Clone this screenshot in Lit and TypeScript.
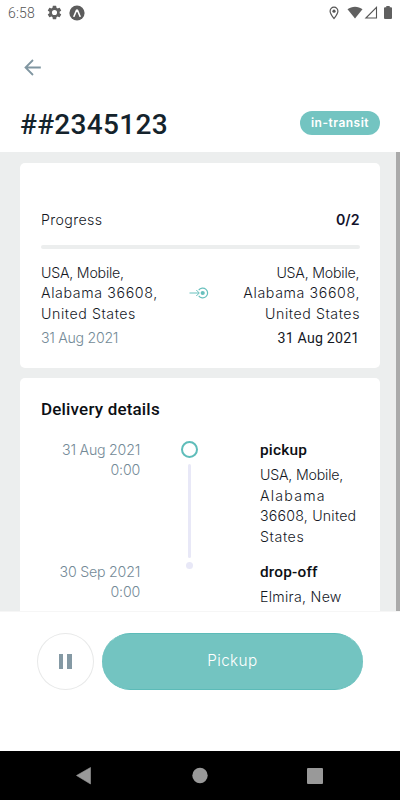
import { LitElement, html, css } from "lit";
import { customElement, property } from "lit/decorators.js";
import { styleMap } from "lit/directives/style-map.js";

/* A line of text with its own tracking, in pixels. */
type Line = [text: string, tracking: number];

const lineOf = ([text, tracking]: Line) =>
  html`<div class="text" style=${styleMap({ letterSpacing: `${tracking}px`, marginRight: `${-tracking}px` })}>${text}</div>`;

const route: Line[] = [["USA, Mobile,", -0.22], ["Alabama 36608,", 0.62], ["United States", 0.56]];

@customElement("status-bar")
class StatusBar extends LitElement {
  static styles = css`
    :host { display: flex; height: 26px; box-sizing: border-box; padding: 0 8px; align-items: center; justify-content: space-between; color: #555; }
    .time { font: 300 14px/26px Roboto, sans-serif; width: 39px; letter-spacing: 0.2px; }
    .left, .right { display: flex; align-items: center; margin-top: -1px; }
    svg { display: block; }
    .gear { margin-right: 7px; margin-left: -.5px; }
    .pin { margin-right: 8px; }
    .wifi { margin-right: 1px; }
    .signal { margin-right: 6px; }
    .right { margin-right: 0.500px; }
  `;
  render() {
    return html`
      <div class="left">
        <span class="time">6:58</span>
        <svg class="gear" width="15" height="15" viewBox="1.500 1.500 21 21" fill="#606060"><path d="M19.14 12.94c.04-.3.06-.61.06-.94s-.02-.64-.07-.94l2.03-1.58a.49.49 0 0 0 .12-.61l-1.92-3.32a.49.49 0 0 0-.59-.22l-2.39.96c-.5-.38-1.03-.7-1.62-.94l-.36-2.54a.48.48 0 0 0-.48-.41h-3.84c-.24 0-.43.17-.47.41l-.36 2.54c-.59.24-1.13.57-1.62.94l-2.39-.96a.48.48 0 0 0-.59.22L2.74 8.87a.47.47 0 0 0 .12.61l2.03 1.58c-.05.3-.09.63-.09.94s.02.64.07.94l-2.03 1.58a.49.49 0 0 0-.12.61l1.92 3.32c.12.22.37.29.59.22l2.39-.96c.5.38 1.03.7 1.62.94l.36 2.54c.05.24.24.41.48.41h3.84c.24 0 .44-.17.47-.41l.36-2.54c.59-.24 1.13-.56 1.62-.94l2.39.96c.22.08.47 0 .59-.22l1.92-3.32a.47.47 0 0 0-.12-.61zM12 15.6A3.6 3.6 0 1 1 12 8.4a3.6 3.6 0 0 1 0 7.2z"/></svg>
        <svg width="16" height="16" viewBox="0 0 16 16"><circle cx="8" cy="8" r="7.600" fill="#5c5c5c"/><path d="M5 11.200 7.400 5.500Q8 4.500 8.600 5.500L11 11.200" fill="none" stroke="#fff" stroke-width="1.600" stroke-linecap="round" stroke-linejoin="round"/></svg>
      </div>
      <div class="right">
        <svg class="pin" width="10" height="14" viewBox="0 0 10 14"><path d="M5 1.200a3.900 3.900 0 0 0-3.900 4C1.100 7.500 3.500 10.500 5 12.500 6.500 10.500 8.900 7.500 8.900 5.200A3.900 3.900 0 0 0 5 1.200z" fill="none" stroke="#555" stroke-width="1.200"/><circle cx="5" cy="5.200" r="1.600" fill="#555"/></svg>
        <svg class="wifi" width="16" height="13" viewBox="0 0 16 13"><path d="M.5 3.300C4.800-.2 11.200-.2 15.500 3.300L8 12.500z" fill="#606060"/></svg>
        <svg class="signal" width="14" height="13" viewBox="0 0 14 13"><path d="M12.500 1.400V12H1.900z" fill="none" stroke="#555" stroke-width="1.100"/></svg>
        <svg width="8" height="13" viewBox="0 0 8 13"><path d="M2.300 0h3.400v1.300H7q1 0 1 1V12q0 1-1 1H1q-1 0-1-1V2.300q0-1 1-1h1.300z" fill="#606060"/></svg>
      </div>`;
  }
}

@customElement("timeline-stop")
class TimelineStop extends LitElement {
  @property() date = "";
  @property() time = "";
  @property() kind = "";
  @property({ type: Boolean }) active = false;
  @property({ attribute: false }) lines: Line[] = [];
  static styles = css`
    :host { display: grid; grid-template-columns: 99px 99px 1fr; height: 122px; font: 300 14.2px/20.4px Inter, sans-serif; color: #15181f; }
    .when { text-align: right; color: #748a97; white-space: nowrap; letter-spacing: -0.22px; }
    .when div, .text { height: 20.4px; white-space: nowrap; }
    .rail { display: flex; flex-direction: column; align-items: center; }
    .ring { width: 17px; height: 17px; box-sizing: border-box; border: 2px solid #5fbdba; border-radius: 50%; margin-top: 1px; }
    .line { width: 2.5px; height: 94px; margin-top: 6px; background: #e8e8f7; border-radius: 2px; }
    .dot { width: 7px; height: 7px; border-radius: 50%; background: #e8e8f7; }
    .where { padding-left: 21px; }
    .kind { font: 500 15.4px/21px Roboto, sans-serif; height: 25.4px; letter-spacing: 0.2px; color: #0c0f14; }
  `;
  render() {
    return html`
      <div class="when"><div>${this.date}</div><div>${this.time}</div></div>
      <div class="rail">${this.active ? html`<span class="ring"></span><span class="line"></span>` : html`<span class="dot"></span>`}</div>
      <div class="where">
        <div class="kind">${this.kind}</div>
        ${this.lines.map(lineOf)}
      </div>`;
  }
}

@customElement("app-root")
class AppRoot extends LitElement {
  static styles = css`
    :host { display: flex; flex-direction: column; width: 400px; height: 800px; overflow: hidden; background: #fff; color: #15181f; font: 300 14.2px/20.4px Inter, sans-serif; }
    svg { display: block; }
    .header { height: 126px; box-sizing: border-box; padding: 33px 20px 0 21px; flex: none; }
    .back { margin-left: 3px; }
    .title-row { display: flex; justify-content: space-between; align-items: center; height: 40px; margin-top: 27px; }
    .title { font: 500 28px/40px Roboto, sans-serif; margin: 0 0 0 -1px; color: #14232c; letter-spacing: 0.3px; padding-top: 3px; }
    .badge { background: #73c4c1; color: #fff; font: 600 12px/23px Inter, sans-serif; width: 80px; height: 24px; border-radius: 12px; text-align: center; letter-spacing: 0.5px; }
    .body { flex: none; height: 460px; background: #eceeee; display: flex; overflow: hidden; box-sizing: border-box; border-bottom: 1px solid #f6f6f6; }
    .cards { flex: 1; display: flex; flex-direction: column; gap: 10px; padding: 11px 16px 0 20px; }
    .scroll { width: 4px; background: #aaa; }
    .card { background: #fff; border-radius: 5px; padding: 0 20.5px 0 21px; flex: none; }
    .summary { height: 205px; box-sizing: border-box; padding-top: 46px; }
    .progress { display: flex; justify-content: space-between; height: 22px; line-height: 22px; }
    .label { letter-spacing: 0.38px; }
    .count { font-weight: 600; color: #12122c; }
    .track { height: 4px; border-radius: 2px; background: #eceeee; margin: 14px 0; }
    .route { display: flex; justify-content: space-between; }
    .place { width: 130px; white-space: nowrap; }
    .text { height: 20.4px; }
    .to { text-align: right; }
    .date { color: #748a97; margin-top: 4px; letter-spacing: -0.3px; }
    .to .date { font: 400 14.2px/21.4px Roboto, sans-serif; color: #15181f; letter-spacing: 0.2px; }
    .arrow { margin: 23px 0 0 -2px; }
    .details { height: 260px; padding-top: 20px; box-sizing: border-box; }
    h2 { font: 500 17px/22px Roboto, sans-serif; color: #0c0f14; margin: 0 0 20px; letter-spacing: 0.18px; }
    .footer { flex: none; height: 139px; box-sizing: border-box; padding: 21px 37px 0; display: flex; gap: 8px; }
    .pause { width: 57px; height: 57px; box-sizing: border-box; border: 1px solid #e8e9e9; border-radius: 50%; display: flex; gap: 4px; align-items: center; justify-content: center; }
    .pause span { width: 4.5px; height: 15px; background: #8499a4; }
    .pickup { width: 262px; height: 57px; box-sizing: border-box; border: 1px solid #5cbbb8; border-width: 1px 0; border-radius: 29px; background: #73c4c1; color: #fff; font: 300 15.3px/53px Inter, sans-serif; letter-spacing: 0.4px; text-align: center; }
    .nav { flex: none; height: 49px; background: #000; }
  `;
  render() {
    return html`
      <status-bar></status-bar>
      <div class="header">
        <svg class="back" width="18" height="17" viewBox="0 0 18 17"><path d="M16.800 8.500H1.500M9 1 1.500 8.500 9 16" fill="none" stroke="#8096a1" stroke-width="1.800"/></svg>
        <div class="title-row">
          <h1 class="title">##2345123</h1>
          <div class="badge">in-transit</div>
        </div>
      </div>
      <div class="body">
        <div class="cards">
          <div class="card summary">
            <div class="progress"><span class="label">Progress</span><span class="count">0/2</span></div>
            <div class="track"></div>
            <div class="route">
              <div class="place">${route.map(lineOf)}<div class="date">31 Aug 2021</div></div>
              <svg class="arrow" width="20" height="14" viewBox="0 0 20 14" fill="none" stroke="#68c0bd"><path d="M.5 7h9.500M7.300 4l3 3-3 3"/><path d="M9.700 4.200A4.900 4.900 0 1 1 9.700 9.800" stroke-width="1.200"/><circle cx="13.700" cy="7" r="2.100" fill="#68c0bd" stroke="none"/></svg>
              <div class="place to">${route.map(lineOf)}<div class="date">31 Aug 2021</div></div>
            </div>
          </div>
          <div class="card details">
            <h2>Delivery details</h2>
            <timeline-stop active date="31 Aug 2021" time="0:00" kind="pickup" .lines=${[["USA, Mobile,", -0.2], ["Alabama", 1.2], ["36608, United", 0.2], ["States", 0.6]] as Line[]}></timeline-stop>
            <timeline-stop date="30 Sep 2021" time="0:00" kind="drop-off" .lines=${[["Elmira, New", 0.28]] as Line[]}></timeline-stop>
          </div>
        </div>
        <div class="scroll"></div>
      </div>
      <div class="footer">
        <div class="pause"><span></span><span></span></div>
        <div class="pickup">Pickup</div>
      </div>
      <div class="nav">
        <svg width="400" height="49" viewBox="0 0 400 49" fill="#999">
          <path d="M76.500 24.500 90.500 16.500V33z" stroke="#999" stroke-width=".6" stroke-linejoin="round"/>
          <circle cx="200" cy="24.500" r="7.700"/>
          <rect x="307" y="17" width="16" height="16" rx="1"/>
        </svg>
      </div>`;
  }
}
